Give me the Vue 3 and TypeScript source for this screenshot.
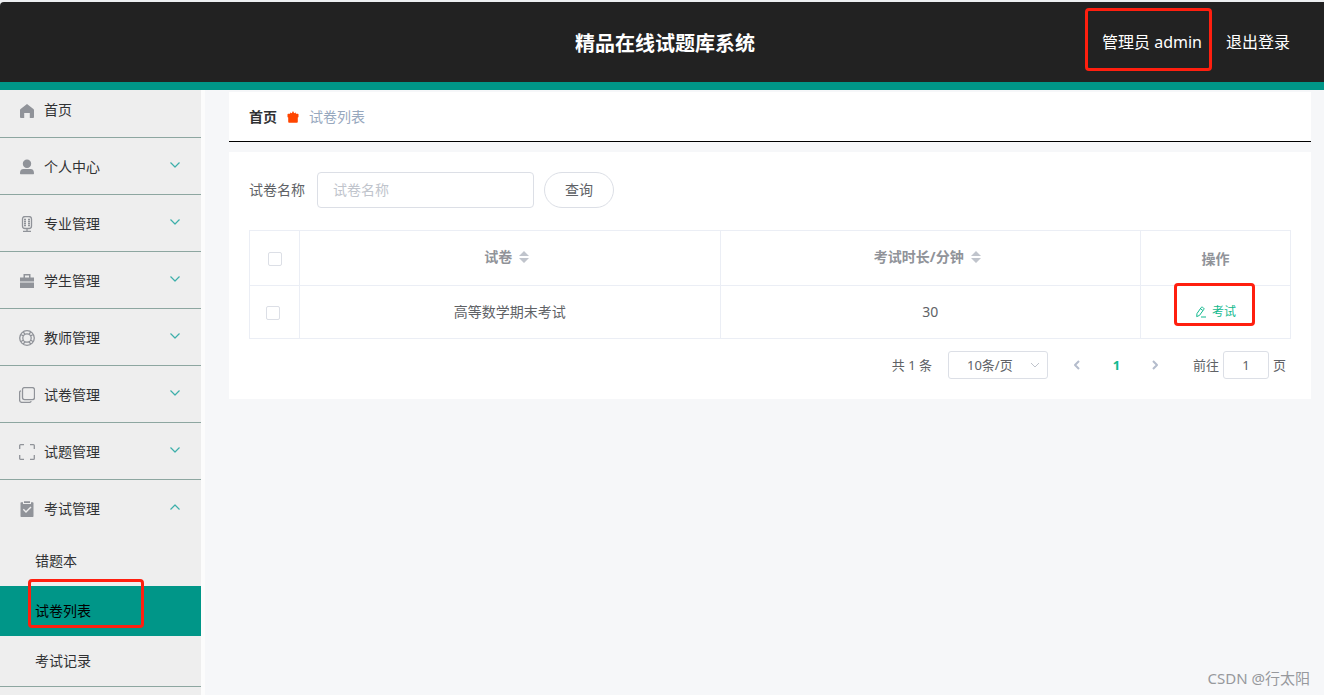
<script setup lang="ts">
import { ref } from 'vue'

interface MenuItem {
  label: string
  fill?: string
  stroke?: string
  open?: boolean
  children?: string[]
}

const menu: MenuItem[] = [
  { label: '个人中心', fill: 'M8 .5a4.200 4.200 0 0 1 4.200 4.200C12.200 7.300 10.400 9 8 9S3.800 7.300 3.800 4.700A4.200 4.200 0 0 1 8 .5zM1 14.200C1 11.500 2.200 10 4.500 10h7c2.300 0 3.500 1.500 3.500 4.200 0 .8-.3 1.100-1 1.100H2c-.7 0-1-.3-1-1.100z' },
  { label: '专业管理', stroke: 'M6 .5h4c1.500 0 2.500 1 2.500 2.500v7c0 1.500-1 2.500-2.500 2.500H6c-1.500 0-2.500-1-2.500-2.500V3C3.500 1.500 4.500.5 6 .5zM8 12.500v3M4 15.500h8M5 3.500h2M9 3.500h2M5 5.500h2M9 5.500h2M5 7.500h2M9 7.500h2M5 9.500h2M9 9.500h2' },
  { label: '学生管理', fill: 'M4.500 1h7v3.500H15v4H1v-4h3.500zM6 2.500v2h4v-2zM1 9.500h14V15H1z' },
  { label: '教师管理', stroke: 'M8 .7a7.300 7.300 0 1 0 0 14.600A7.300 7.300 0 1 0 8 .7zM8 3.800a4.200 4.200 0 1 0 0 8.400 4.200 4.200 0 1 0 0-8.400zM4.300 1.800l1.700 2.500M11.700 1.800L10 4.300M4.300 14.200L6 11.700M11.700 14.200L10 11.700M1.800 4.300L4.300 6M14.200 4.300L11.700 6M1.800 11.700L4.300 10M14.200 11.700L11.700 10' },
  { label: '试卷管理', stroke: 'M5.500.6h8a2 2 0 0 1 2 2v8a2 2 0 0 1-2 2h-8a2 2 0 0 1-2-2v-8a2 2 0 0 1 2-2zM2 3.800c-1 .2-1.400.8-1.400 1.500v7.600c0 1.600 1 2.500 2.500 2.500h7.400c.8 0 1.500-.4 1.700-1.200' },
  { label: '试题管理', stroke: 'M.7 5V1.600c0-.6.400-.9.900-.9H5M11 .7h3.400c.6 0 .9.300.9.900V5M15.300 11v3.400c0 .6-.3.900-.9.900H11M5 15.300H1.600c-.6 0-.9-.3-.9-.9V11' },
  {
    label: '考试管理',
    fill: 'M4 1.200V3h8V1.200h1.500c.7 0 1 .3 1 1V15c0 .6-.3 1-1 1h-11c-.7 0-1-.4-1-1V2.200c0-.7.300-1 1-1zM5 .3h6v1.700H5zM3.800 8.700l3.200 3.200 5.500-5.500-1-1L7 9.900 4.800 7.700z',
    open: true,
    children: ['错题本', '试卷列表', '考试记录'],
  },
]
const active = ref('试卷列表')
const keyword = ref('')
const pageSize = ref('10')
const jump = ref('1')
const rows = [{ name: '高等数学期末考试', minutes: 30 }]
</script>

<template>
  <div class="page">
    <header class="header">
      <h1>精品在线试题库系统</h1>
      <div class="account">
        <span class="user">管理员 admin<i class="mark mark-user"></i></span>
        <a href="#">退出登录</a>
      </div>
    </header>

    <div class="body">
      <nav class="sidebar">
        <ul>
          <li class="home">
            <a class="entry" href="#">
              <svg class="icon" viewBox="0 0 16 16"><path class="fill" d="M8 2l6.400 5c.4.300.6.700.6 1.200V15c0 .6-.3.900-.9.900h-3.300v-4.800H5.200v4.800H1.900c-.6 0-.9-.3-.9-.9V8.200c0-.5.200-.9.600-1.200z" /></svg>
              <span>首页</span>
            </a>
          </li>
          <li v-for="item in menu" :key="item.label">
            <button class="entry" type="button" :aria-expanded="!!item.open">
              <svg class="icon" viewBox="0 0 16 16">
                <path v-if="item.fill" class="fill" :d="item.fill" />
                <path v-if="item.stroke" class="stroke" :d="item.stroke" />
              </svg>
              <span>{{ item.label }}</span>
              <svg class="arrow" viewBox="0 0 12 12"><path :d="item.open ? 'M1.500 8.500L6 4l4.500 4.500' : 'M1.500 3.500L6 8l4.500-4.500'" /></svg>
            </button>
            <ul v-if="item.children" class="sub">
              <li v-for="child in item.children" :key="child">
                <a href="#" :class="{ active: child === active }" @click.prevent="active = child">{{ child }}</a>
                <i v-if="child === '试卷列表'" class="mark mark-menu"></i>
              </li>
            </ul>
          </li>
        </ul>
      </nav>

      <main class="main">
        <div class="crumbs">
          <a href="#">首页</a>
          <svg class="gift" viewBox="0 0 12 12"><path d="M4.800 2.200L6 0l1.200 2.200 1.800-.6-.2 1.200h2c.5 0 .7.200.7.700v2.300c0 .5-.2.700-.7.700v4c0 .9-.4 1.300-1.200 1.300H2.400c-.8 0-1.200-.4-1.200-1.300v-4c-.5 0-.7-.2-.7-.7V3.500c0-.5.200-.7.700-.7h2L3 1.600z" /></svg>
          <span>试卷列表</span>
        </div>

        <section class="card">
          <form class="search" @submit.prevent>
            <label for="paper">试卷名称</label>
            <input id="paper" v-model="keyword" type="text" placeholder="试卷名称" />
            <button type="submit">查询</button>
          </form>

          <table>
            <colgroup><col class="c-check" /><col /><col /><col class="c-act" /></colgroup>
            <thead>
              <tr>
                <th class="check-head"><input type="checkbox" aria-label="全选" /></th>
                <th v-for="title in ['试卷', '考试时长/分钟']" :key="title">
                  <div class="sortable">
                    {{ title }}
                    <svg viewBox="0 0 10 12"><path d="M5 0l5 5H0zM0 7h10l-5 5z" /></svg>
                  </div>
                </th>
                <th>操作</th>
              </tr>
            </thead>
            <tbody>
              <tr v-for="row in rows" :key="row.name">
                <td class="check-cell"><input type="checkbox" :aria-label="row.name" /></td>
                <td>{{ row.name }}</td>
                <td>{{ row.minutes }}</td>
                <td class="action">
                  <button type="button">
                    <svg viewBox="0 0 12 12"><path d="M2 7.500L6.200 1.500c.4-.5.900-.6 1.400-.2l1 .7c.5.400.6.900.2 1.400L4.500 9.400l-2.800 1.200zM5.500 2.700l2.300 1.700M6 11h5" /></svg>
                    考试
                  </button>
                  <i class="mark mark-action"></i>
                </td>
              </tr>
            </tbody>
          </table>

          <div class="pager">
            <span class="total">共 1 条</span>
            <div class="size">
              <select v-model="pageSize" aria-label="每页条数">
                <option value="10">10条/页</option>
                <option value="20">20条/页</option>
              </select>
              <svg viewBox="0 0 12 12"><path d="M2 4l4 4 4-4" /></svg>
            </div>
            <div class="numbers">
              <button type="button" aria-label="上一页"><svg viewBox="0 0 12 12"><path d="M8 2L4 6l4 4" /></svg></button>
              <button type="button" class="current">1</button>
              <button type="button" aria-label="下一页"><svg viewBox="0 0 12 12"><path d="M4 2l4 4-4 4" /></svg></button>
            </div>
            <label class="jump">前往<input v-model="jump" type="text" />页</label>
          </div>
        </section>
      </main>
    </div>
    <div class="watermark">CSDN @行太阳</div>
  </div>
</template>

<style>
body {
  margin: 0;
  background: #f6f7f9;
}
</style>

<style scoped>
* {
  box-sizing: border-box;
}
.page {
  display: flex;
  flex-direction: column;
  height: 100vh;
  overflow: hidden;
  border-top: 2px solid #edeff1;
  background: #edeff1;
  font: 14px/20px "Noto Sans", "Noto Sans CJK SC", sans-serif;
  color: #606266;
}
ul {
  margin: 0;
  padding: 0;
  list-style: none;
}
a {
  color: inherit;
  text-decoration: none;
}
button,
input,
select {
  margin: 0;
  font: inherit;
  color: inherit;
}
button {
  padding: 0;
  border: 0;
  background: none;
}
.header {
  flex: none;
  display: grid;
  grid-template-columns: 1fr auto 1fr;
  align-items: center;
  height: 88px;
  padding: 0 34px 0 40px;
  border-bottom: 8px solid #009688;
  border-top-left-radius: 4px;
  background: #222;
  color: #fff;
}
.header h1 {
  grid-column: 2;
  margin: 0;
  padding-top: 4px;
  font-size: 20px;
  line-height: 30px;
  font-weight: 700;
}
.account {
  display: flex;
  justify-content: flex-end;
  gap: 24px;
  font-size: 16px;
  line-height: 24px;
}
.user {
  position: relative;
}
.mark {
  position: absolute;
  border: 3px solid #ff1f0f;
  border-radius: 4px;
  pointer-events: none;
}
.mark-user {
  inset: -22px -10px -17px -17px;
}
.body {
  flex: 1;
  display: flex;
  min-height: 0;
  background: #f6f7f9;
}
.sidebar {
  flex: none;
  width: 205px;
  border-right: 4px solid #fcfcfc;
  background: #eee;
  color: #303133;
}
.sidebar > ul > li {
  border-bottom: 1px solid #8da6a0;
}
.entry {
  display: flex;
  align-items: center;
  width: 100%;
  height: 56px;
  padding: 2px 20px 0 19px;
  text-align: left;
}
.home .entry {
  height: 47px;
  padding-top: 0;
  padding-bottom: 7px;
}
.icon {
  width: 16px;
  height: 16px;
  margin-right: 9px;
}
.icon .fill {
  fill: #909399;
  fill-rule: evenodd;
}
.icon .stroke {
  fill: none;
  stroke: #909399;
  stroke-width: 1.3;
}
.arrow {
  width: 12px;
  height: 12px;
  margin: 0 0 4px auto;
}
.arrow path {
  fill: none;
  stroke: #3dafaa;
  stroke-width: 1.2;
}
.sub li {
  position: relative;
}
.sub a {
  display: block;
  height: 50px;
  padding-left: 35px;
  line-height: 50px;
}
.sub .active {
  background: #009688;
  color: #000;
}
.mark-menu {
  left: 28px;
  top: -7px;
  width: 116px;
  height: 49px;
}
.main {
  flex: 1;
  min-width: 0;
  padding: 2px 13px 0 24px;
}
.crumbs {
  display: flex;
  align-items: center;
  gap: 10px;
  height: 50px;
  padding: 0 20px;
  border-bottom: 1px solid #000;
  background: #fff;
  color: #97a8be;
}
.crumbs a {
  color: #303133;
  font-weight: 700;
}
.gift {
  width: 12px;
  height: 12px;
  fill: #ff4500;
}
.card {
  margin-top: 10px;
  padding: 20px;
  background: #fff;
}
.search {
  display: flex;
  align-items: center;
  height: 36px;
  margin-bottom: 22px;
}
.search input {
  width: 217px;
  height: 36px;
  margin: 0 10px 0 12px;
  padding: 0 15px 2px;
  border: 1px solid #dcdfe6;
  border-radius: 4px;
  background: #fff;
}
.search input::placeholder {
  color: #c0c4cc;
}
.search button {
  width: 70px;
  height: 36px;
  border: 1px solid #dcdfe6;
  border-radius: 18px;
}
table {
  width: 100%;
  table-layout: fixed;
  border-collapse: collapse;
  text-align: center;
}
.c-check {
  width: 50px;
}
.c-act {
  width: 150px;
}
th,
td {
  height: 53px;
  padding: 0;
  border: 1px solid #ebeef5;
}
th {
  height: 55px;
  padding-top: 2px;
  color: #909399;
  font-weight: 700;
}
.check-cell {
  padding-top: 2px;
  padding-right: 4px;
}
input[type="checkbox"] {
  display: block;
  width: 14px;
  height: 14px;
  margin: 0 auto;
  appearance: none;
  border: 1px solid #dcdfe6;
  border-radius: 2px;
  background: #fff;
}
.sortable {
  display: flex;
  align-items: center;
  justify-content: center;
  gap: 7px;
  padding: 0 6px 4px 0;
}
.sortable svg {
  width: 10px;
  height: 12px;
  fill: #c0c4cc;
}
.action {
  position: relative;
}
.action button {
  display: inline-flex;
  align-items: center;
  gap: 5px;
  color: #11b98e;
  font-size: 12px;
  line-height: 20px;
}
.action svg {
  width: 12px;
  height: 12px;
}
svg path {
  stroke-linejoin: round;
}
.action svg path {
  fill: none;
  stroke: #11b98e;
}
.mark-action {
  left: 33px;
  top: -3px;
  width: 81px;
  height: 43px;
}
.pager {
  display: flex;
  align-items: center;
  justify-content: flex-end;
  height: 28px;
  margin-top: 12px;
  padding-right: 5px;
  font-size: 13px;
}
.size {
  position: relative;
  margin: 0 10px 0 16px;
}
.size select {
  display: block;
  width: 100px;
  height: 28px;
  padding: 0 25px 0 18px;
  appearance: none;
  border: 1px solid #dcdfe6;
  border-radius: 3px;
  background: #fff;
}
.size svg {
  position: absolute;
  top: 8px;
  right: 7px;
  width: 12px;
  height: 12px;
}
.size path {
  fill: none;
  stroke: #c0c4cc;
}
.numbers {
  display: flex;
}
.numbers button {
  display: flex;
  align-items: center;
  justify-content: center;
  width: 39px;
  height: 28px;
}
.numbers svg {
  width: 12px;
  height: 12px;
}
.numbers path {
  fill: none;
  stroke: #b4bccc;
  stroke-width: 2;
}
.numbers .current {
  color: #11b98e;
  font-weight: 700;
}
.jump {
  display: flex;
  align-items: center;
  gap: 4px;
  margin-left: 18px;
}
.jump input {
  width: 46px;
  height: 28px;
  padding: 0 3px;
  border: 1px solid #dcdfe6;
  border-radius: 3px;
  background: #fff;
  text-align: center;
}
.watermark {
  position: absolute;
  right: 14px;
  bottom: 7px;
  color: #97999d;
  font-size: 15px;
}
</style>
